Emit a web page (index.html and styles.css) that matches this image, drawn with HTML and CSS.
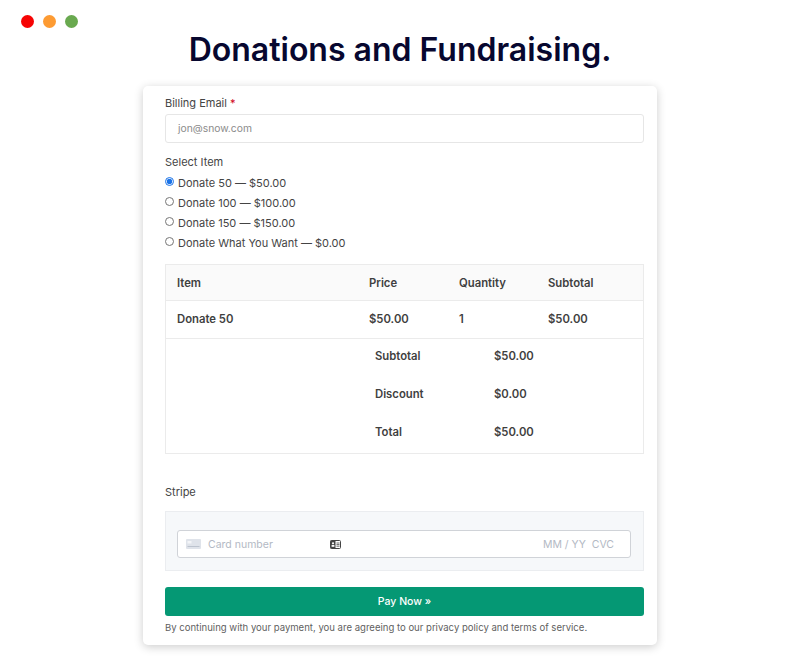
FILE: index.html
```html
<!DOCTYPE html>
<html lang="en">
<head>
    <meta charset="UTF-8">
    <title>Donations and Fundraising</title>
    <link rel="stylesheet" href="styles.css">
</head>
<body>

    <!-- window buttons -->
    <div class="window-dots">
        <span class="dot dot-red"></span>
        <span class="dot dot-orange"></span>
        <span class="dot dot-green"></span>
    </div>

    <h1 class="page-title">Donations and Fundraising.</h1>

    <div class="checkout-card">
        <label class="field-label">Billing Email <span class="required">*</span></label>
        <div class="text-input">jon@snow.com</div>

        <div class="field-label select-label">Select Item</div>
        <div class="radio-list">
            <label class="radio-row"><input type="radio" name="item" checked> Donate 50 — $50.00</label>
            <label class="radio-row"><input type="radio" name="item"> Donate 100 — $100.00</label>
            <label class="radio-row"><input type="radio" name="item"> Donate 150 — $150.00</label>
            <label class="radio-row"><input type="radio" name="item"> Donate What You Want — $0.00</label>
        </div>

        <div class="order-table">
            <div class="order-row order-head">
                <span>Item</span><span>Price</span><span>Quantity</span><span>Subtotal</span>
            </div>
            <div class="order-row order-item">
                <span>Donate 50</span><span>$50.00</span><span>1</span><span>$50.00</span>
            </div>
            <div class="order-summary">
                <span>Subtotal</span><span>$50.00</span>
                <span>Discount</span><span>$0.00</span>
                <span>Total</span><span>$50.00</span>
            </div>
        </div>

        <div class="field-label stripe-label">Stripe</div>
        <div class="stripe-box">
            <div class="card-input">
                <svg class="card-brand" width="15" height="10" viewBox="0 0 15 10">
                    <rect width="15" height="10" rx="1" fill="#dfe3ea"/>
                    <rect x="1.5" y="2" width="4" height="2.5" fill="#f4f5f8"/>
                    <rect x="1.5" y="7" width="12" height="1" fill="#bcc3ce"/>
                </svg>
                <span class="card-number">Card number</span>
                <svg class="card-autofill" width="11" height="9" viewBox="0 0 11 9">
                    <rect x="0.5" y="0.5" width="10" height="8" rx="1" fill="#fff" stroke="#444"/>
                    <rect x="0.5" y="0.5" width="5" height="8" fill="#444"/>
                    <circle cx="3" cy="3.3" r="1.1" fill="#fff"/>
                    <rect x="1.6" y="5" width="2.8" height="1.8" fill="#fff"/>
                    <path d="M6.5 3h3M6.5 4.6h3M6.5 6.2h3" stroke="#444" stroke-width="0.8"/>
                </svg>
                <span class="card-extra">MM / YY&nbsp; CVC</span>
            </div>
        </div>

        <button class="pay-button">Pay Now »</button>
        <p class="terms">By continuing with your payment, you are agreeing to our privacy policy and terms of service.</p>
    </div>

</body>
</html>
```

FILE: styles.css
```css
html, body { margin: 0; padding: 0; height: 100%; overflow: hidden; background-color: #fff; }
body { font-family: Inter, "Liberation Sans", sans-serif; font-size: 11px; color: #444; }

.window-dots { display: flex; gap: 9px; padding: 15px 0 0 21px; height: 13px; }
.dot { width: 13px; height: 13px; border-radius: 50%; }
.dot-red { background-color: #f60404; }
.dot-orange { background-color: #fd9b33; }
.dot-green { background-color: #69a94f; }

.page-title { margin: 0; height: 42px; line-height: 44px; text-align: center; font-family: Inter, sans-serif; font-size: 32px; font-weight: 600; color: #07072f; }

.checkout-card { box-sizing: border-box; width: 514px; height: 559px; margin: 16px auto 0; padding: 10px 13px 0 22px; background-color: #fff; border-radius: 5px; box-shadow: 0 2px 10px rgba(0,0,0,0.2); }

.field-label { display: block; height: 15px; line-height: 15px; color: #444; }
.required { color: #d0021b; }
.text-input { box-sizing: border-box; height: 29px; line-height: 27px; margin-top: 3px; padding-left: 12px; border: 1px solid #e6e6e6; border-radius: 3px; color: #8b8b8b; font-size: 10.3px; }

.select-label { margin-top: 12px; }
.radio-list { margin-top: 3px; }
.radio-row { display: flex; align-items: center; height: 20px; color: #444; }
.radio-row input { width: 9px; height: 9px; margin: 0 4px 4px 0; accent-color: #1a73e8; }

.order-table { margin-top: 11px; border: 1px solid #ebebeb; font-size: 11.3px; font-weight: 600; color: #3f3f3f; }
.order-row { display: grid; grid-template-columns: 192px 90px 89px 1fr; align-items: center; padding-left: 11px; border-bottom: 1px solid #ebebeb; }
.order-head { height: 35px; background-color: #fafafa; }
.order-item { height: 35px; padding-bottom: 2px; }
.order-summary { display: grid; grid-template-columns: 119px 1fr; grid-auto-rows: 38px; align-items: center; padding-left: 209px; height: 116px; margin-top: -2px; }

.stripe-label { margin-top: 31px; }
.stripe-box { box-sizing: border-box; height: 60px; margin-top: 11px; padding: 18px 12px 0 11px; background-color: #f6f8fa; border: 1px solid #ebedf0; }
.card-input { box-sizing: border-box; display: flex; align-items: center; height: 28px; padding: 0 16px 0 8px; background-color: #fff; border: 1px solid #d0d3d8; border-radius: 3px; color: #b3b9c4; font-size: 10.5px; }
.card-brand { margin-right: 7px; }
.card-number { width: 122px; }
.card-extra { margin-left: auto; }

.pay-button { display: block; width: 100%; height: 29px; margin-top: 16px; padding: 0; background-color: #059874; border: none; border-radius: 3px; color: #fff; font-family: inherit; font-size: 10.5px; font-weight: 500; cursor: pointer; }
.terms { margin: 5px 0 0; font-size: 9.55px; line-height: 13px; color: #5f5f5f; white-space: nowrap; }
```
